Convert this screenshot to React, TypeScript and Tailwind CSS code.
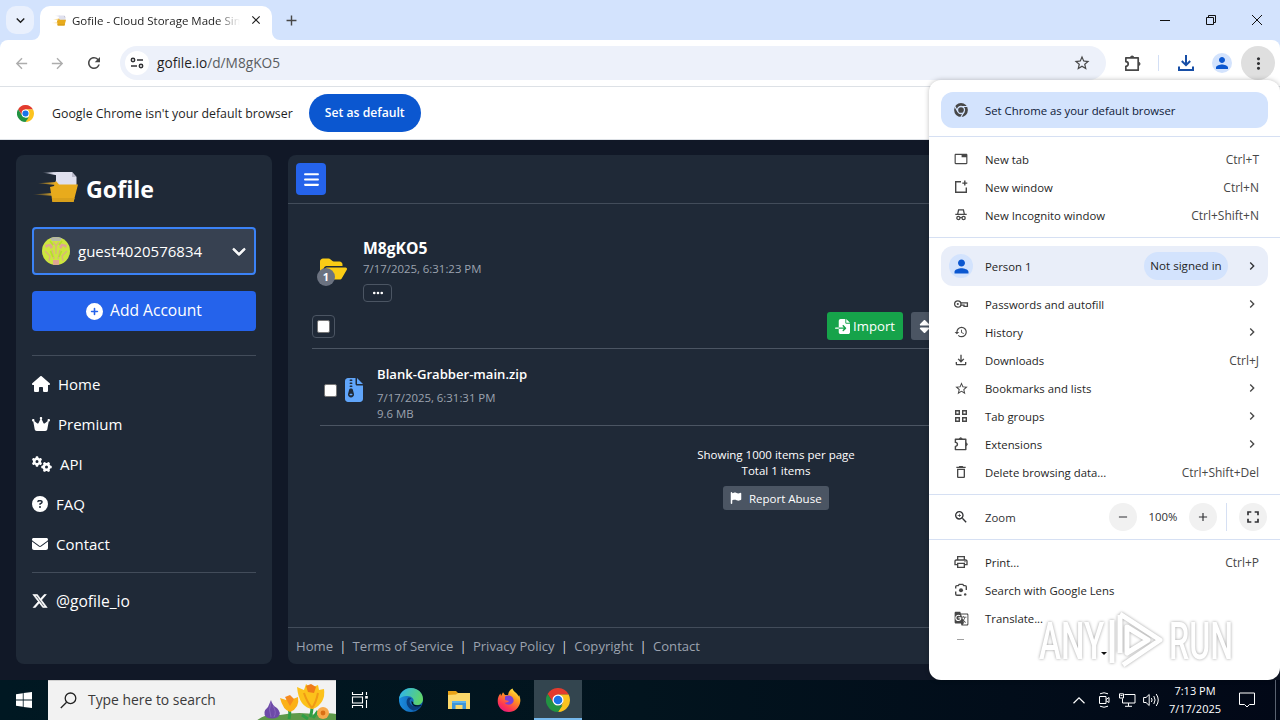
import type { ReactNode } from 'react';
import {
  FaBars, FaChevronDown, FaCirclePlus, FaCircleQuestion, FaCrown, FaEllipsis, FaEnvelope, FaFileImport,
  FaFileZipper, FaFlag, FaFolderOpen, FaGears, FaHouse, FaSort, FaXTwitter,
} from 'react-icons/fa6';
import {
  MdAdd, MdArrowBack, MdArrowForward, MdChevronRight, MdClose, MdFullscreen, MdGTranslate, MdHistory,
  MdKeyboardArrowDown, MdMoreVert, MdOutlineDelete, MdOutlineFileDownload, MdOutlinePrint, MdPerson,
  MdRefresh, MdRemove, MdStarBorder, MdTab, MdZoomIn,
} from 'react-icons/md';

const ChromeLogo = ({ size }: { size: number }) => (
  <svg width={size} height={size} viewBox="0 0 48 48">
    <path d="M24 13 H45.3 L44.8 12 A24 24 0 0 0 3.2 12 L14.5 29.5 Z" fill="#e33b2e" />
    <path d="M24 13 H45.3 A24 24 0 0 1 24 48 L33.5 29.5 Z" fill="#fcc31e" />
    <path d="M3.2 12 L14.5 29.5 L24 35 H33 L24 48 A24 24 0 0 1 3.2 12 Z" fill="#229342" />
    <circle cx="24" cy="24" r="11" fill="#fff" />
    <circle cx="24" cy="24" r="8.6" fill="#1a73e8" />
  </svg>
);

const ChromeMono = () => (
  <svg width="16" height="16" viewBox="0 0 16 16" fill="none">
    <circle cx="8" cy="8" r="6.9" fill="#474747" />
    <circle cx="8" cy="8" r="3.5" stroke="#d3e3fd" strokeWidth="1.3" />
    <path d="M8 4.5 H14.6 M4.9 9.6 L1.7 4.2 M11.1 9.7 L7.8 15.2" stroke="#d3e3fd" strokeWidth="1.2" />
  </svg>
);

const Puzzle = ({ size }: { size: number }) => (
  <svg width={size} height={size} viewBox="0 0 20 20" fill="none" stroke="#474747" strokeWidth="1.8" strokeLinejoin="round">
    <path d="M3 4 H16 V17 H3 V13 a2.5 2.5 0 0 0 0 -5 Z" />
    <path d="M7.8 3.4 a1.9 1.9 0 0 1 3.6 0 Z M16.6 8.6 a1.9 1.9 0 0 1 0 3.6 Z" fill="#474747" strokeWidth="1" />
  </svg>
);

const NewWindow = () => (
  <svg width="16" height="16" viewBox="0 0 16 16" fill="none" stroke="#474747" strokeWidth="1.4">
    <path d="M8 2.7 H2.7 V13.3 H13.3 V8.5 M11.8 1.6 V6.6 M9.3 4.1 H14.3" />
  </svg>
);

const Incognito = () => (
  <svg width="16" height="16" viewBox="0 0 16 16" fill="none" stroke="#474747" strokeWidth="1.3">
    <path d="M4.7 6.8 L5.6 2.9 H10.4 L11.3 6.8 M2.3 7.3 H13.7" />
    <circle cx="5.4" cy="11" r="1.6" />
    <circle cx="10.6" cy="11" r="1.6" />
    <path d="M7 10.7 Q8 10.1 9 10.7" />
  </svg>
);

const PasswordKey = () => (
  <svg width="16" height="16" viewBox="0 0 16 16" fill="none" stroke="#474747" strokeWidth="1.3">
    <circle cx="4.8" cy="8" r="3.2" />
    <circle cx="4.8" cy="8" r="1.1" fill="#474747" stroke="none" />
    <path d="M7.8 6.8 H14.4 V10.4 H11 V9.2 H8" />
  </svg>
);

const TabGroups = () => (
  <svg width="16" height="16" viewBox="0 0 16 16" fill="none" stroke="#474747" strokeWidth="1.4">
    <path d="M2.7 2.7 h3.6 v3.6 h-3.6 z M9.7 2.7 h3.6 v3.6 h-3.6 z M2.7 9.7 h3.6 v3.6 h-3.6 z M9.7 9.7 h3.6 v3.6 h-3.6 z" />
  </svg>
);

const Lens = () => (
  <svg width="16" height="16" viewBox="0 0 16 16" fill="none" stroke="#474747" strokeWidth="1.4">
    <path d="M2.7 6.5 V4.8 Q2.7 3.6 3.9 3.6 H5.3 L6.2 2.4 H9.8 L10.7 3.6 H12.1 Q13.3 3.6 13.3 4.8 V8 M2.7 9.5 V12 Q2.7 13.3 4 13.3 H8.5" />
    <circle cx="8" cy="8.3" r="2" fill="#474747" stroke="none" />
    <circle cx="12.2" cy="12.4" r="1.2" fill="#474747" stroke="none" />
  </svg>
);

const GofileLogo = ({ className }: { className: string }) => (
  <svg viewBox="0 0 46 32" className={className}>
    <defs>
      <linearGradient id="speed" x1="0" x2="1">
        <stop offset="0" stopColor="#e8a919" stopOpacity="0" />
        <stop offset="1" stopColor="#f0b429" />
      </linearGradient>
      <linearGradient id="paper" x1="0" x2="1">
        <stop offset="0" stopColor="#dfe0ee" stopOpacity="0" />
        <stop offset="0.7" stopColor="#dfe0ee" />
      </linearGradient>
    </defs>
    <path d="M10 1.5 L26 1 V4.5 Z" fill="url(#paper)" />
    <path d="M24 1 H40 L44.5 6 V18 H22 L24 9 Z" fill="#dfe0ee" />
    <path d="M40 1 L44.5 6 H40 Z" fill="#b9bacb" />
    <path d="M0 23.5 L20 22 V24.8 Z M6 12.3 L24 11 V14 Z" fill="url(#speed)" />
    <path d="M24 10 L22 15 L18 16 L20.5 31 H41.5 L46 13.5 H27 Z" fill="#e8ab1c" />
    <path d="M19.8 27 L20.5 31 H41.5 L42.6 27 Z" fill="#d9a01b" />
  </svg>
);

const Avatar = () => (
  <svg width="28" height="28" viewBox="0 0 28 28">
    <defs>
      <clipPath id="face"><circle cx="14" cy="14" r="14" /></clipPath>
    </defs>
    <g clipPath="url(#face)">
      <rect width="28" height="28" fill="#cde63f" />
      <path d="M7 0 H21 L18 4 H10 Z" fill="#b6b7a8" />
      <path d="M3 8 L9 6.5 L11 10 L9 12 L7 9 L4 11 Z M25 8 L19 6.5 L17 10 L19 12 L21 9 L24 11 Z M11 23 H17 V28 H11 Z" fill="#dfa592" />
      <path d="M3 14 L8 19 L7 24 M25 14 L20 19 L21 24 M11 5 L14 9 L17 5 M14 9 V17 M10 13 L12 22 M18 13 L16 22" stroke="#d9b27c" strokeWidth="1.3" fill="none" />
      <path d="M8.5 14 L11 20 M19.5 14 L17 20 M8 4 L11 8 M20 4 L17 8" stroke="#b4e02a" strokeWidth="1.6" />
    </g>
  </svg>
);

const navItems = [
  { icon: <FaHouse className="h-4 w-[18px]" />, label: 'Home' },
  { icon: <FaCrown className="h-4 w-[18px]" />, label: 'Premium' },
  { icon: <FaGears className="h-4 w-5" />, label: 'API' },
  { icon: <FaCircleQuestion className="h-4 w-4" />, label: 'FAQ' },
  { icon: <FaEnvelope className="h-4 w-4" />, label: 'Contact' },
];

type MenuRowProps = { icon: ReactNode; label: string; shortcut?: string; arrow?: boolean };

const MenuRow = ({ icon, label, shortcut, arrow }: MenuRowProps) => (
  <div className="flex h-7 items-center pr-[21px] pl-6 text-[#474747]">
    <span className="-mt-0.5 flex w-4 justify-center">{icon}</span>
    <span className="ml-4 flex-1 text-[#1f1f1f]">{label}</span>
    {shortcut && <span className="text-[12px]">{shortcut}</span>}
    {arrow && <MdChevronRight size={16} className="-mt-0.5 -mr-px" />}
  </div>
);

const TabStrip = () => (
  <div className="flex h-10 bg-[#d3e3fd]">
    <div className="mt-1.5 ml-1.5 flex h-7 w-7 items-center justify-center rounded-[10px] bg-[#e9f0fd]">
      <MdKeyboardArrowDown size={17} className="text-[#1f1f1f]" />
    </div>
    <div className="relative mt-1.5 ml-1.5 flex h-[34px] w-58 items-start rounded-t-[10px] bg-white pt-[7px] pl-[11px]">
      <svg className="absolute bottom-0 -left-2 h-2 w-2" viewBox="0 0 8 8"><path d="M8 0 V8 H0 A8 8 0 0 0 8 0" fill="#fff" /></svg>
      <svg className="absolute -right-2 bottom-0 h-2 w-2" viewBox="0 0 8 8"><path d="M0 0 V8 H8 A8 8 0 0 1 0 0" fill="#fff" /></svg>
      <GofileLogo className="mt-[2px] h-[11px] w-[15px]" />
      <span className="ml-1.5 w-[168px] overflow-hidden bg-gradient-to-r from-[#1f1f1f] from-86% to-transparent bg-clip-text text-[11.5px] leading-[15px] whitespace-nowrap text-transparent">
        Gofile - Cloud Storage Made Sim
      </span>
      <MdClose size={14} className="ml-[9px] text-[#1f1f1f]" />
    </div>
    <MdAdd size={17} className="mt-3 ml-[11px] text-[#474747]" />
    <div className="ml-auto flex items-center gap-[34px] pr-[17px]">
      <svg width="12" height="12" viewBox="0 0 12 12" stroke="#111"><path d="M1 6.5 H11" /></svg>
      <svg width="12" height="12" viewBox="0 0 12 12" stroke="#111" fill="none"><path d="M1.5 3.5 H8.5 V10.5 H1.5 Z M3.5 3.5 V1.5 H10.5 V8.5 H8.5" /></svg>
      <svg width="12" height="12" viewBox="0 0 12 12" stroke="#111"><path d="M1 1 L11 11 M11 1 L1 11" /></svg>
    </div>
  </div>
);

const Toolbar = () => (
  <div className="bg-[#d3e3fd]">
    <div className="flex h-[47px] items-center rounded-t-lg border-b border-[#dde1e6] bg-white pl-[13px]">
      <MdArrowBack size={17} className="text-[#adadad]" />
      <MdArrowForward size={17} className="ml-[19px] text-[#adadad]" />
      <MdRefresh size={18} className="ml-[19px] text-[#474747]" />
      <div className="ml-[17px] flex h-[34px] w-[986px] items-center rounded-full bg-[#edf1fa] pr-[15px] pl-[5px]">
        <div className="flex h-6 w-6 items-center justify-center rounded-full bg-white">
          <svg width="14" height="14" viewBox="0 0 14 14" fill="none" stroke="#303134" strokeWidth="1.5">
            <circle cx="3" cy="4" r="1.7" />
            <path d="M7 4 H13 M1 10 H7" />
            <circle cx="11" cy="10" r="1.7" />
          </svg>
        </div>
        <span className="ml-2 flex-1 text-[13.7px] text-[#5a5d61]"><span className="text-[#1f1f1f]">gofile.io</span>/d/M8gKO5</span>
        <MdStarBorder size={18} className="text-[#474747]" />
      </div>
      <span className="ml-[17px]"><Puzzle size={19} /></span>
      <span className="ml-4 h-4 w-px bg-[#d3dff5]" />
      <svg className="ml-[18px]" width="18" height="18" viewBox="0 0 18 18" fill="none" stroke="#174ea6" strokeWidth="2">
        <path d="M9 1 V11 M4.8 7 L9 11.2 L13.2 7 M2 12.5 V16 H16 V12.5" />
      </svg>
      <span className="ml-[17px] flex h-5 w-5 items-center justify-center rounded-full bg-[#d3e3fd] text-[#0b57d0]"><MdPerson size={18} /></span>
      <span className="ml-[9px] flex h-[34px] w-[34px] items-center justify-center rounded-full bg-[#dfdfdf] text-[#303134]"><MdMoreVert size={19} /></span>
    </div>
  </div>
);

const Sidebar = () => (
  <aside className="h-[509px] w-64 rounded-lg bg-[#1f2937] px-4 text-[15px] text-white">
    <div className="flex h-[72px] items-center pb-1">
      <GofileLogo className="-mt-1 h-8 w-[46px]" />
      <span className="ml-2 text-[23.2px] font-bold">Gofile</span>
    </div>
    <div className="flex h-12 items-center rounded border-2 border-[#3b82f6] bg-[#374151] pr-2 pl-2">
      <Avatar />
      <span className="ml-2 flex-1">guest4020576834</span>
      <FaChevronDown size={14} stroke="currentColor" strokeWidth={36} />
    </div>
    <div className="mt-4 flex h-10 items-center justify-center rounded-sm bg-[#2563eb]">
      <FaCirclePlus size={17} />
      <span className="ml-[7px] text-[15.6px]">Add Account</span>
    </div>
    <div className="mt-6 border-t border-[#4b5563]/80 pt-2">
      {navItems.map((item) => (
        <div key={item.label} className="flex h-10 items-center gap-2">
          {item.icon}
          <span>{item.label}</span>
        </div>
      ))}
    </div>
    <div className="mt-2 flex border-t border-[#4b5563]/80 pt-[17px]">
      <FaXTwitter size={16} className="mt-[3px]" stroke="currentColor" strokeWidth={18} />
      <span className="ml-2 text-[15.6px]">@gofile_io</span>
    </div>
  </aside>
);

const Content = () => (
  <main className="flex h-[509px] w-[976px] flex-col rounded-lg bg-[#1f2937] text-white">
    <div className="h-[49px] border-b border-[#4b5563]/80 p-2">
      <div className="flex h-8 w-[30px] items-center justify-center rounded-sm bg-[#2563eb]">
        <FaBars size={17} />
      </div>
    </div>
    <div className="flex-1 px-6 pt-8">
      <div className="flex pl-2">
        <div className="relative mt-[21px] h-6 w-[27px]">
          <FaFolderOpen className="h-6 w-[27px] text-[#facc15]" />
          <span className="absolute top-[11px] -left-[3px] flex h-[18px] w-[18px] items-center justify-center rounded-full bg-[#6b7280] text-[11px] font-bold">1</span>
        </div>
        <div className="ml-4">
          <div className="text-[15.7px] leading-6 font-bold">M8gKO5</div>
          <div className="pt-px text-[11.4px] leading-4 text-[#9ca3af]">7/17/2025, 6:31:23 PM</div>
          <div className="mt-[7px] flex h-[18px] w-[29px] items-center justify-center rounded border border-[#4b5563]">
            <FaEllipsis size={12} />
          </div>
        </div>
      </div>
      <div className="mt-[10px] flex h-[37px] items-start border-b border-[#4b5563]">
        <div className="mt-[3px] flex h-[23px] w-[23px] items-center justify-center rounded border border-[#4b5563]">
          <span className="h-[13px] w-[13px] rounded-[2px] border border-[#767676] bg-white" />
        </div>
        <div className="ml-[492px] flex h-7 w-19 items-center rounded-[3px] bg-[#16a34a] pl-2 text-[13.2px]">
          <FaFileImport size={15} />
          <span className="ml-[3px] pt-px">Import</span>
        </div>
        <div className="ml-2 flex h-7 w-20 items-center rounded-[3px] bg-[#4b5563] pl-[6px]">
          <FaSort size={15} />
        </div>
      </div>
      <div className="mx-2 flex h-[77px] border-b border-[#4b5563] pl-1">
        <span className="mt-[35px] h-[13px] w-[13px] rounded-[2px] border border-[#767676] bg-white" />
        <FaFileZipper className="mt-[29px] ml-2 h-6 w-[18px] text-[#60a5fa]" />
        <div className="ml-[14px]">
          <div className="mt-[15px] text-[13.1px] leading-5 font-semibold">Blank-Grabber-main.zip</div>
          <div className="mt-[6px] text-[11.4px] leading-4 text-[#9ca3af]">7/17/2025, 6:31:31 PM</div>
          <div className="text-[11.4px] leading-4 text-[#9ca3af]">9.6 MB</div>
        </div>
      </div>
      <div className="mt-[21px] text-center text-[11.5px] leading-4">
        <div>Showing 1000 items per page</div>
        <div>Total 1 items</div>
      </div>
      <div className="mx-auto mt-[7px] flex h-6 w-[106px] items-center rounded-[3px] bg-[#4b5563] pl-[7px] text-[11.5px]">
        <FaFlag size={12} />
        <span className="ml-[7px] pt-px">Report Abuse</span>
      </div>
    </div>
    <div className="flex h-[37px] items-center border-t border-[#4b5563]/80 pl-2 text-[13.1px] text-[#9ca3af]">
      {['Home', 'Terms of Service', 'Privacy Policy', 'Copyright', 'Contact'].map((link, i) => (
        <span key={link} className="flex pt-px">
          {i > 0 && <span className="px-[6.2px] text-[#d1d5db]">|</span>}
          {link}
        </span>
      ))}
    </div>
  </main>
);

const ChromeMenu = () => (
  <div className="absolute top-20 left-[929px] h-[600px] w-[351px] overflow-hidden rounded-xl bg-white pt-3 text-[11.35px] text-[#1f1f1f] shadow-[0_0_5px_rgba(0,0,0,0.25)]">
    <div className="mx-3 flex h-9 items-center rounded-xl bg-[#d3e3fd] pl-3">
      <ChromeMono />
      <span className="ml-4 pt-0.5 text-[#0f2038]">Set Chrome as your default browser</span>
    </div>
    <div className="mt-2 border-y border-[#d6e0f3] pt-[9px] pb-[7px]">
      <MenuRow icon={<MdTab size={14} />} label="New tab" shortcut="Ctrl+T" />
      <MenuRow icon={<NewWindow />} label="New window" shortcut="Ctrl+N" />
      <MenuRow icon={<Incognito />} label="New Incognito window" shortcut="Ctrl+Shift+N" />
    </div>
    <div className="mx-3 mt-2 flex h-10 items-center rounded-xl bg-[#e9eef9] pr-2 pl-2">
      <span className="flex h-6 w-6 items-center justify-center rounded-full bg-[#d3e3fd] text-[#0b57d0]"><MdPerson size={21} /></span>
      <span className="ml-3 flex-1 pt-px">Person 1</span>
      <span className="flex h-7 w-[84px] items-center justify-center rounded-full bg-[#d3e3fd] text-[11.6px]">Not signed in</span>
      <MdChevronRight size={16} className="ml-4 text-[#303134]" />
    </div>
    <div className="mt-[5px] border-b border-[#d6e0f3] pb-[7px]">
      <MenuRow icon={<PasswordKey />} label="Passwords and autofill" arrow />
      <MenuRow icon={<MdHistory size={14} />} label="History" arrow />
      <MenuRow icon={<MdOutlineFileDownload size={16} />} label="Downloads" shortcut="Ctrl+J" />
      <MenuRow icon={<MdStarBorder size={15} />} label="Bookmarks and lists" arrow />
      <MenuRow icon={<TabGroups />} label="Tab groups" arrow />
      <MenuRow icon={<Puzzle size={16} />} label="Extensions" arrow />
      <MenuRow icon={<MdOutlineDelete size={16} />} label="Delete browsing data..." shortcut="Ctrl+Shift+Del" />
    </div>
    <div className="flex h-[45px] items-center border-b border-[#d6e0f3] pl-6 text-[#303134]">
      <MdZoomIn size={16} />
      <span className="ml-4 w-[124px] pt-0.5">Zoom</span>
      <span className="flex h-7 w-7 items-center justify-center rounded-full bg-[#f1f1f1]"><MdRemove size={14} /></span>
      <span className="w-[52px] text-center">100%</span>
      <span className="flex h-7 w-7 items-center justify-center rounded-full bg-[#f1f1f1]"><MdAdd size={14} /></span>
      <span className="ml-[9px] h-7 w-px bg-[#d6e0f3]" />
      <span className="ml-[12px] flex h-7 w-7 items-center justify-center rounded-full bg-[#f1f1f1]"><MdFullscreen size={20} /></span>
    </div>
    <div className="pt-[9px]">
      <MenuRow icon={<MdOutlinePrint size={16} />} label="Print..." shortcut="Ctrl+P" />
      <MenuRow icon={<Lens />} label="Search with Google Lens" />
      <MenuRow icon={<MdGTranslate size={15} />} label="Translate..." />
    </div>
    <div className="mt-[6px] ml-[28px] h-px w-[7px] bg-[#a0a0a0]" />
    <svg className="mt-3 ml-[172px]" width="6" height="3" viewBox="0 0 6 3"><path d="M0 0 H6 L3 3 Z" fill="#111" /></svg>
  </div>
);

const Watermark = () => (
  <div className="absolute top-[608px] left-[1039px] flex h-[66px] w-[196px] items-center font-['Roboto'] text-[51px] leading-none font-medium text-white drop-shadow-[0_0_1.5px_rgba(0,0,0,0.38)]">
    <span className="w-[66px] origin-left scale-x-[0.65]">ANY</span>
    <svg width="60" height="64" viewBox="0 0 60 64" className="shrink-0" fill="none" strokeLinejoin="round">
      <path d="M7 11 V54 M15 6 V44 M15 5 L55 31 L18 56 M22 18 L43 31 L22 44 Z" stroke="#fff" strokeWidth="5" />
    </svg>
    <span className="ml-[4px] w-[64px] origin-left scale-x-[0.63]">RUN</span>
  </div>
);

const Flowers = () => (
  <svg width="80" height="40" viewBox="0 0 80 40">
    <path d="M0 40 Q10 32 24 34 Q45 30 60 34 Q72 31 80 33 V40 Z" fill="#5f9a4a" />
    <path d="M33 38 Q35 30 32 24 M54 36 Q58 26 54 20 M46 34 L52 38 M62 30 L57 37" stroke="#2f9e44" strokeWidth="3" fill="none" />
    <path d="M15 19 Q16 24 21 27 Q26 32 22 36 Q16 39 10 36 Q6 31 12 26 Z" fill="#6d4aa8" />
    <path d="M15 21 Q12 29 15 36 M17 25 Q21 31 18 36" stroke="#8565bb" fill="none" />
    <path d="M24 17 L30 19 L33 15 L37 18 L42 16 Q44 27 34 31 Q27 29 24 17 Z" fill="#fbb117" />
    <path d="M29 16 L34 14 L38 18 L34 25 Z" fill="#f58a1f" />
    <path d="M41 6 L48 9 L50 3 L55 7 L62 4 L63 9 L68 8 Q70 22 57 28 Q43 27 41 6 Z" fill="#fcc21b" />
    <path d="M50 5 L55 3 L60 6 L58 12 L52 11 Z" fill="#ef7c1a" />
    <path d="M48 12 Q51 21 56 27 M62 12 Q60 22 56 27" stroke="#f09a16" strokeWidth="2" fill="none" />
    <circle cx="67" cy="32" r="6" fill="#f7a94b" />
    <circle cx="67" cy="32" r="2.4" fill="#d96f15" />
  </svg>
);

const Taskbar = () => (
  <div className="flex h-10 bg-gradient-to-r from-[#001822] via-[#02141e] to-[#020817] text-white">
    <div className="flex w-12 items-center justify-center">
      <svg width="16" height="16" viewBox="0 0 16 16" fill="#fff"><path d="M0 2.2 L6.8 1.3 V7.6 H0 Z M7.6 1.1 L16 0 V7.6 H7.6 Z M0 8.4 H6.8 V14.7 L0 13.8 Z M7.6 8.4 H16 V16 L7.6 14.9 Z" /></svg>
    </div>
    <div className="flex h-10 w-72 items-center border-t border-[#d0d0d0] bg-[#f2f2f2] pl-3 text-[#3a3a3a]">
      <svg width="17" height="17" viewBox="0 0 17 17" fill="none" stroke="#222" strokeWidth="1.3"><circle cx="10.5" cy="6.3" r="5.3" /><path d="M6.6 10.2 L0.8 16" /></svg>
      <span className="ml-[11px] flex-1 text-[13.9px]">Type here to search</span>
      <Flowers />
    </div>
    <div className="flex w-12 items-center justify-center">
      <svg width="18" height="16" viewBox="0 0 18 16" fill="none" stroke="#fff"><path d="M1.5 0 V2.5 H11.5 V0 M1.5 5 H11.5 V11 H1.5 Z M1.5 16 V13.5 H11.5 V16 M15.5 0 V3 M15.5 8 V16" strokeWidth="1.1" /><path d="M14.2 4 h2.6 v2.6 h-2.6 z" fill="#fff" stroke="none" /></svg>
    </div>
    <div className="ml-[3px] flex w-12 items-center justify-center">
      <svg width="24" height="24" viewBox="0 0 24 24">
        <defs>
          <linearGradient id="edgeTop" x1="0" x2="1" y1="0.3" y2="0.6"><stop offset="0" stopColor="#2fb5ea" /><stop offset="1" stopColor="#62d663" /></linearGradient>
          <linearGradient id="edgeLow" x1="0" x2="1"><stop offset="0" stopColor="#1b8ee0" /><stop offset="1" stopColor="#0c4f9e" /></linearGradient>
        </defs>
        <circle cx="12" cy="12" r="12" fill="url(#edgeLow)" />
        <path d="M0 11 C1 4 6 0 12 0 C19 0 24 5 24 11 C24 15 21 17 18 17 C15 17 13.6 15.8 14.2 14.5 C16 11 12.5 8 8.5 8 C4.5 8 1 9.5 0 11 Z" fill="url(#edgeTop)" />
        <path d="M9.5 9.6 C5.5 13 8 21 14.5 22.5 C18 22 20.5 20.3 22.4 17.6 C18 19.5 12 18.5 10.8 14.5 C10.2 12.6 11 10.8 12.6 10.4 C11.6 9.6 10.5 9.4 9.5 9.6 Z" fill="#0b3f7e" />
        <path d="M22.8 17 C18 20 12 18.5 12.5 13 L14.3 14.2 C13.8 16 15.4 17.3 18 17.3 C20 17.3 22 16.6 22.8 17 Z" fill="#001722" />
      </svg>
    </div>
    <div className="flex w-12 items-center justify-center">
      <svg width="22" height="18" viewBox="0 0 22 18">
        <path d="M0 0 H8 L10 2 H20 V6 H0 Z" fill="#e8a317" />
        <path d="M0 4 L8 3.4 L10 2 H22 V18 H0 Z" fill="#fbd86a" />
        <path d="M4 18 V10 H18 V18 H14.5 V14 H7.5 V18 Z" fill="#3f95d8" />
        <path d="M4 10 H18 V12 H4 Z" fill="#5eb3ec" />
      </svg>
    </div>
    <div className="ml-[2px] flex w-12 items-center justify-center">
      <svg width="24" height="24" viewBox="0 0 24 24">
        <defs>
          <linearGradient id="fox" x1="0.8" x2="0.2" y1="0" y2="1"><stop offset="0" stopColor="#fff044" /><stop offset="0.35" stopColor="#ff9a1f" /><stop offset="0.75" stopColor="#ff3750" /><stop offset="1" stopColor="#e31587" /></linearGradient>
        </defs>
        <path d="M12 24 C5 24 0.7 19 0.7 13 C0.7 9.5 2 7 3.5 5.5 L4 8 L6 4.3 L8 7 H11 C11.5 4 13 1.5 15.5 0.5 C16 3 19 4.5 20.5 6.5 C21 7.3 21.3 8 21.4 8.5 L22 7 C23.5 10 23.5 12.5 23.2 14 C22.3 20 17.5 24 12 24 Z" fill="url(#fox)" />
        <path d="M8 8.5 C12 6 17.5 9 16.5 13.5 C15.5 17 10 18 7.5 14.5 C9 15 11 14.5 12 13 L8 12 Z" fill="#7b3fd8" />
      </svg>
    </div>
    <div className="ml-px flex w-12 items-center justify-center border-b-2 border-[#76b9ed] bg-[#33454f] pt-0.5">
      <ChromeLogo size={24} />
    </div>
    <div className="ml-auto flex items-center text-center text-[11px] leading-[18px]">
      <svg width="12" height="7" viewBox="0 0 12 7" fill="none" stroke="#fff" strokeWidth="1.2"><path d="M0.5 6.2 L6 0.9 L11.5 6.2" /></svg>
      <svg className="ml-[13px]" width="12" height="16" viewBox="0 0 12 16" fill="none" stroke="#fff"><path d="M1.5 4.5 H8 V11.5 H1.5 Z M8 7.5 L11 5.5 V10.5 L8 8.8 M2 1.8 Q6 -0.3 10 1.8 M2 14.2 Q6 16.3 10 14.2" /></svg>
      <svg className="ml-[9px]" width="17" height="14" viewBox="0 0 17 14" fill="none" stroke="#fff"><path d="M5.5 1.5 H16 V10 H3.5 V5.5 M0.5 0.8 H4.5 V5 H0.5 Z M1.5 2.5 H3.5 M9.5 10 V13 M6 13.3 H13" /></svg>
      <svg className="ml-[7px]" width="17" height="14" viewBox="0 0 17 14" fill="none" stroke="#fff"><path d="M0.6 4.5 H3 L6.2 1.5 V12.5 L3 9.5 H0.6 Z M8.4 5 Q9.8 7 8.4 9 M10.8 3 Q13.4 7 10.8 11 M13.2 1 Q17.3 7 13.2 13" /></svg>
      <div className="ml-2 w-[54px]">
        <div>7:13 PM</div>
        <div>7/17/2025</div>
      </div>
      <svg className="ml-[17px]" width="16" height="16" viewBox="0 0 16 16" fill="none" stroke="#fff"><path d="M0.5 1 H15.5 V12.5 H10.5 L8 15 L5.5 12.5 H0.5 Z" /></svg>
      <div className="ml-5 h-10 w-px bg-[#5a6270]" />
      <div className="w-1" />
    </div>
  </div>
);

export default function App() {
  return (
    <div className="relative h-[720px] w-[1280px] overflow-hidden font-['Open_Sans','Noto_Sans',sans-serif]">
      <TabStrip />
      <Toolbar />
      <div className="flex h-[53px] items-center border-b border-[#dde1e6] bg-white pl-[17px] text-[12.35px] text-[#1f1f1f]">
        <ChromeLogo size={17} />
        <span className="ml-[18px] pt-0.5">Google Chrome isn't your default browser</span>
        <span className="ml-4 flex h-[38px] w-28 items-center justify-center rounded-full bg-[#0b57d0] pt-px text-[12.2px] font-semibold text-white">Set as default</span>
      </div>
      <div className="flex h-[540px] gap-4 bg-[#111827] pt-[15px] pl-4">
        <Sidebar />
        <Content />
      </div>
      <Taskbar />
      <ChromeMenu />
      <Watermark />
    </div>
  );
}
